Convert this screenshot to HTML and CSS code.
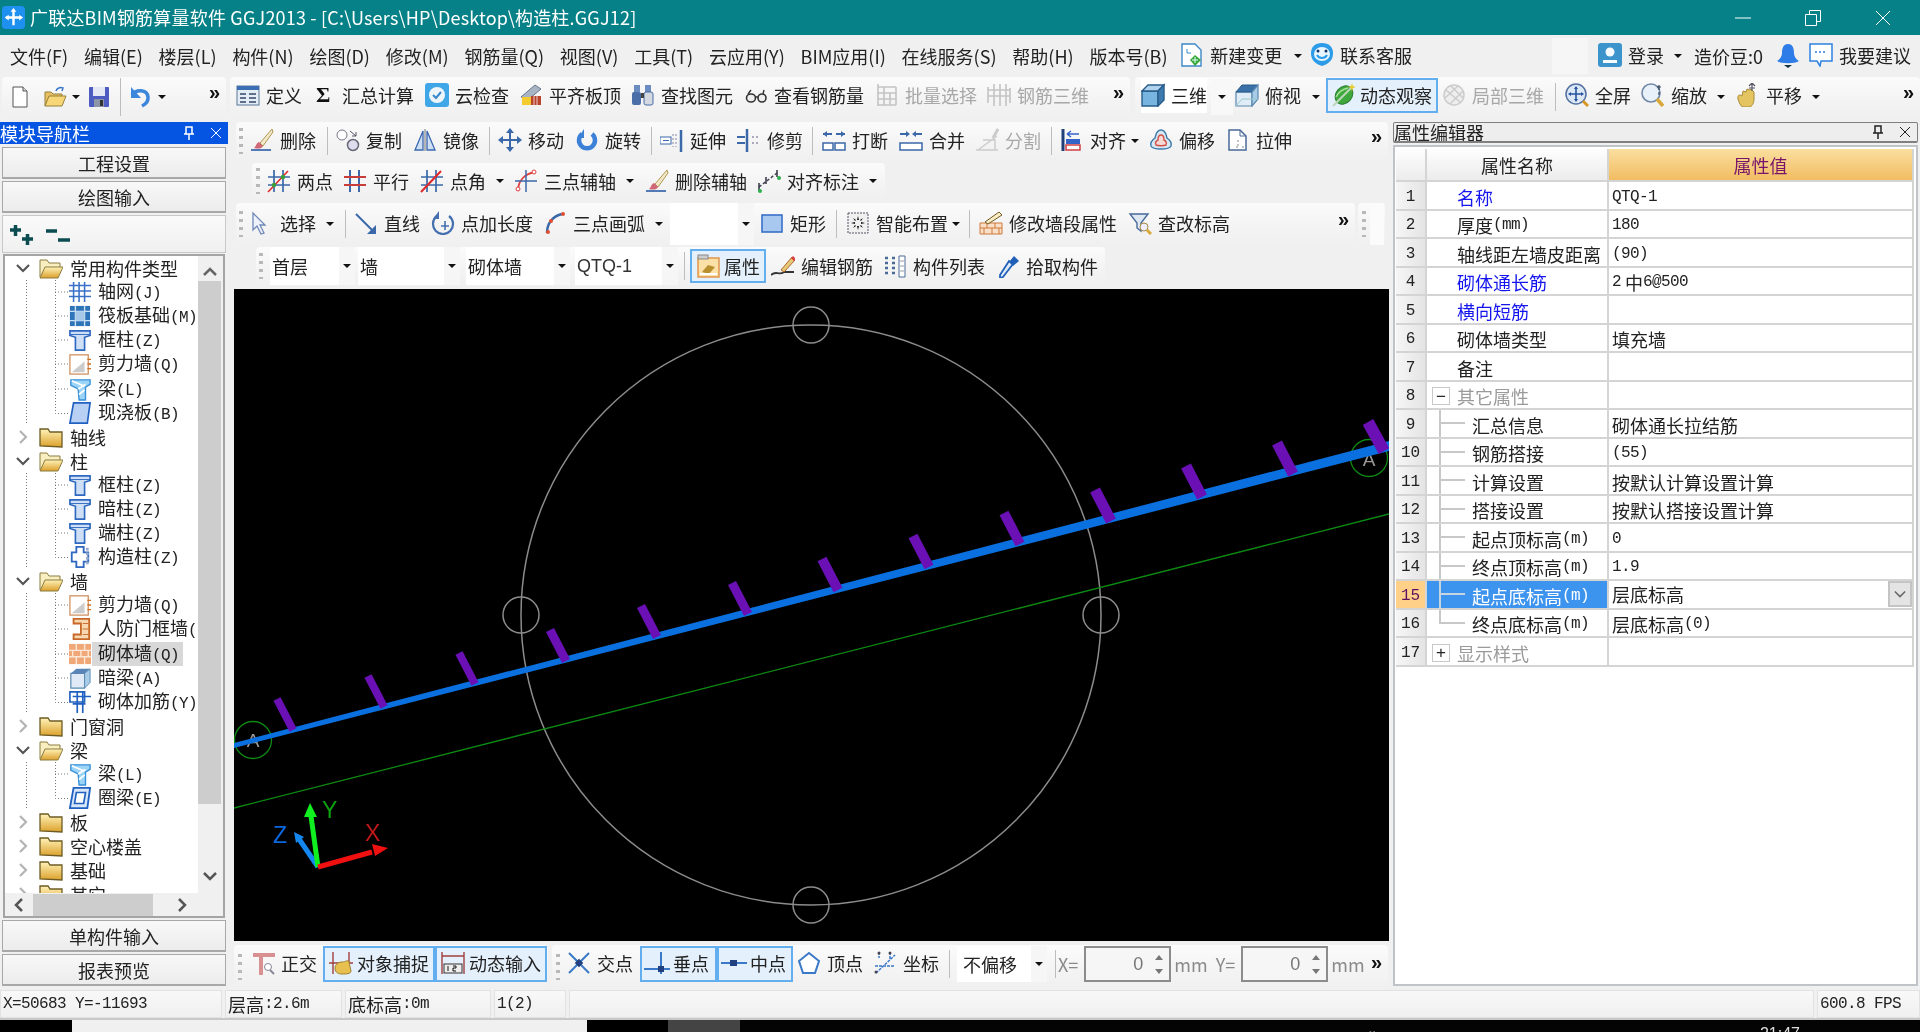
FILE: index.html
```html
<!DOCTYPE html>
<html lang="zh-CN">
<head>
<meta charset="utf-8">
<title>广联达BIM钢筋算量软件 GGJ2013</title>
<link rel="stylesheet" href="styles.css">
</head>
<body>
<svg class="sprite" aria-hidden="true">
<defs>
<linearGradient id="fy" x1="0" y1="0" x2="0" y2="1"><stop offset="0" stop-color="#fff3b8"/><stop offset="1" stop-color="#dca02c"/></linearGradient>
<symbol id="new" viewBox="0 0 24 24"><path d="M5 2h10l4 4v16H5z" fill="#fff" stroke="#555"/><path d="M15 2v4h4" fill="#ddd" stroke="#555"/></symbol>
<symbol id="open" viewBox="0 0 24 24"><path d="M2 21V7h6l2 2h9v3" fill="#e8c060" stroke="#96803c"/><path d="M2 21l4-10h17l-4 10z" fill="#f6d676" stroke="#96803c"/><path d="M13 6c1-3 4-4 7-3l-1 3" fill="none" stroke="#3a78c8" stroke-width="1.5"/></symbol>
<symbol id="save" viewBox="0 0 24 24"><rect x="2" y="2" width="20" height="20" rx="1" fill="#4c5cc0"/><rect x="6" y="2" width="12" height="9" fill="#e4e8f4"/><rect x="7" y="14" width="10" height="8" fill="#8c96a8"/><rect x="13" y="15" width="3" height="6" fill="#333"/></symbol>
<symbol id="undo" viewBox="0 0 24 24"><path d="M3 10c4-6 15-6 16 2 .6 5-4 8-6 9" fill="none" stroke="#3c86dc" stroke-width="3.5"/><path d="M2 2v11h10z" fill="#3c86dc"/></symbol>
<symbol id="def" viewBox="0 0 24 24"><rect x="1" y="3" width="22" height="19" fill="#e4ecf6" stroke="#5a7898"/><rect x="1" y="3" width="22" height="4" fill="#3c6eb4"/><path d="M4 11h6M4 15h6M4 19h6M13 11h7M13 15h7M13 19h7" stroke="#60708a" stroke-width="2"/></symbol>
<symbol id="cloud" viewBox="0 0 24 24"><rect x="0" y="0" width="24" height="24" rx="3" fill="#3fa6e8"/><circle cx="12" cy="12" r="8" fill="#eef6fc"/><path d="M8 12l3 3 5-6" fill="none" stroke="#3a88c8" stroke-width="2"/></symbol>
<symbol id="flat" viewBox="0 0 24 24"><path d="M2 14L16 2l6 4L9 17z" fill="#a8b4c4" stroke="#66788c"/><rect x="3" y="14" width="9" height="8" fill="#f4cc30"/><path d="M12 22V13h10v9z" fill="#b8442c"/><path d="M15 13v9M18 13v9" stroke="#ecc" /></symbol>
<symbol id="binoc" viewBox="0 0 24 24"><rect x="3" y="2" width="6" height="7" fill="#6a8cc0"/><rect x="14" y="2" width="6" height="7" fill="#6a8cc0"/><rect x="1" y="9" width="9" height="13" rx="2" fill="#4a6ea8"/><rect x="13" y="9" width="9" height="13" rx="2" fill="#d4d8e0" stroke="#4a6ea8"/><rect x="10" y="10" width="3" height="5" fill="#444"/></symbol>
<symbol id="glass" viewBox="0 0 24 24"><ellipse cx="7" cy="15" rx="4.5" ry="4" fill="#eee" stroke="#333" stroke-width="1.6"/><ellipse cx="18" cy="15" rx="4" ry="4" fill="#eee" stroke="#333" stroke-width="1.6"/><path d="M11 14h3M4 11l3-4M19 11l1-4" stroke="#333" stroke-width="1.4" fill="none"/></symbol>
<symbol id="batch" viewBox="0 0 24 24"><path d="M3 1v22M3 4h18M3 10h18M3 16h18M3 22h18M9 4v18M21 4v18M15 10v12" stroke="#c4c4c4" stroke-width="1.6" fill="none"/></symbol>
<symbol id="rb3d" viewBox="0 0 24 24"><path d="M1 4v16M7 1v22M13 1v22M19 1v22M23 5v15M1 7h22M1 13h22" stroke="#c4c4c4" stroke-width="1.6" fill="none"/></symbol>
<symbol id="cube" viewBox="0 0 24 24"><path d="M1 8h16v15H1z" fill="#78b4e0" stroke="#285c88" stroke-width="1.4"/><path d="M1 8l6-6h16L17 8z" fill="#b0d4ee" stroke="#285c88" stroke-width="1.4"/><path d="M17 8l6-6v15l-6 6z" fill="#3c7ab0" stroke="#285c88" stroke-width="1.4"/></symbol>
<symbol id="cubet" viewBox="0 0 24 24"><path d="M1 9h16v14H1z" fill="#e0ecf6" stroke="#5a88b0" stroke-width="1.2"/><path d="M1 9l6-7h16l-6 7z" fill="#3a70a8" stroke="#285c88"/><path d="M17 9l6-7v14l-6 7z" fill="#a8cce8" stroke="#5a88b0" stroke-width="1.2"/><path d="M1 23l6-7h16" fill="none" stroke="#9cc" /></symbol>
<symbol id="orbit" viewBox="0 0 24 24"><ellipse cx="12" cy="12" rx="8" ry="10" transform="rotate(40 12 12)" fill="#3ea83c" stroke="#2c7c30"/><path d="M1 23L20 4" stroke="#bcd8b8" stroke-width="2"/><path d="M4 14c3-6 7-8 12-9" fill="none" stroke="#a8e098" stroke-width="1.400"/><path d="M20 0l1 3 3 1-3 1-1 4-1-4-3-1 3-1z" fill="#e8cc30"/></symbol>
<symbol id="ball" viewBox="0 0 24 24"><circle cx="12" cy="12" r="10" fill="#eee" stroke="#ccc" stroke-width="1.5"/><path d="M4 7l14 12M9 3l12 12M3 15L16 3M8 21L21 8" stroke="#ccc" stroke-width="1.5"/></symbol>
<symbol id="full" viewBox="0 0 24 24"><circle cx="11" cy="11" r="10" fill="#dce8f6" stroke="#5470a0" stroke-width="1.5"/><path d="M11 4v14M4 11h14" stroke="#2a54a0" stroke-width="1.6"/><path d="M11 3l-2 3h4zM11 19l-2-3h4zM3 11l3-2v4zM19 11l-3-2v4z" fill="#2a54a0"/><path d="M18 18l5 5" stroke="#d89828" stroke-width="3"/></symbol>
<symbol id="zoom" viewBox="0 0 24 24"><circle cx="10" cy="10" r="9" fill="#e8f0fa" stroke="#7088a8" stroke-width="1.6"/><path d="M16 16l6 7" stroke="#d8a838" stroke-width="3.5"/><path d="M18 2v5M16 4h4M18 9v3" stroke="#345" stroke-width="1.2"/></symbol>
<symbol id="hand" viewBox="0 0 24 24"><path d="M2 16c-1-4 2-5 4-3l1-5 3 1 1-3 3 1 1-1 3 3v7c0 4-2 8-5 8H7c-3-1-4-5-5-8z" fill="#e4c460" stroke="#a88c38"/><path d="M16 0v8M13 3l3-3 3 3M13 5h6" stroke="#556" stroke-width="1.200" fill="none"/></symbol>
<symbol id="del" viewBox="0 0 24 24"><path d="M22 1L10 15l3 3L23 4z" fill="#f0e8c8" stroke="#b09850"/><path d="M9 14c-3 1-3 5-5 6 3 1 8 1 9-2z" fill="#d06878"/><path d="M1 22h20" stroke="#2a5ca8" stroke-width="1.6"/></symbol>
<symbol id="copy" viewBox="0 0 24 24"><circle cx="6" cy="7" r="5" fill="#fff" stroke="#778"/><circle cx="17" cy="17" r="5.5" fill="#dde" stroke="#667" stroke-width="1.5"/><path d="M14 3l6 5M20 4v4h-4" stroke="#556" fill="none"/></symbol>
<symbol id="mirror" viewBox="0 0 24 24"><path d="M10 3L2 22h8z" fill="#cfe0f4" stroke="#3a68b0" stroke-width="1.3"/><path d="M14 3l8 19h-8z" fill="#cfe0f4" stroke="#3a68b0" stroke-width="1.3"/><path d="M12 1v22" stroke="#777"/></symbol>
<symbol id="move" viewBox="0 0 24 24"><path d="M12 3v18M3 12h18" stroke="#3a68a8" stroke-width="2"/><path d="M12 0l-4 5h8zM12 24l-4-5h8zM0 12l5-4v8zM24 12l-5-4v8z" fill="#3a68a8"/></symbol>
<symbol id="rot" viewBox="0 0 24 24"><path d="M7 6a8 8 0 1 0 10 0" fill="none" stroke="#3c80d8" stroke-width="4.5"/><path d="M9 1v9H3z" fill="#3c80d8"/></symbol>
<symbol id="ext" viewBox="0 0 24 24"><rect x="0" y="9" width="11" height="7" fill="#fff" stroke="#3a68a8"/><path d="M3 12.500h6" stroke="#3a68a8" /><path d="M13 6v13M16 6v13" stroke="#88a" stroke-dasharray="2 2"/><path d="M21 2v22" stroke="#3a68a8" stroke-width="2.5"/></symbol>
<symbol id="trim" viewBox="0 0 24 24"><path d="M0 9h8M0 15h8" stroke="#3a68a8" stroke-width="2"/><path d="M10 1v23" stroke="#3a68a8" stroke-width="2.500"/><path d="M15 9h7M15 15h7" stroke="#aab" stroke-width="2" stroke-dasharray="2 2"/></symbol>
<symbol id="brk" viewBox="0 0 24 24"><path d="M1 15h10v7H1zM13 15h10v7H13z" fill="#fff" stroke="#3a68a8" stroke-width="1.500"/><path d="M1 6h9M14 6h9" stroke="#3a68a8" stroke-width="2"/><path d="M1 6l4-3v6zM23 6l-4-3v6z" fill="#3a68a8"/></symbol>
<symbol id="mrg" viewBox="0 0 24 24"><path d="M1 15h22v7H1z" fill="#fff" stroke="#3a68a8" stroke-width="1.500"/><path d="M1 6h8M15 6h8" stroke="#3a68a8" stroke-width="2"/><path d="M11 6L7 3v6zM13 6l4-3v6z" fill="#3a68a8"/></symbol>
<symbol id="spl" viewBox="0 0 24 24"><path d="M1 22h22M3 22l19-14M8 12h12v10" stroke="#ccc" stroke-width="1.500" fill="none"/><path d="M18 10L23 1" stroke="#ccc" stroke-width="3"/></symbol>
<symbol id="aln" viewBox="0 0 24 24"><path d="M3 1v22" stroke="#20407c" stroke-width="3"/><rect x="6" y="11" width="14" height="5" fill="#3464c8"/><rect x="6" y="17" width="14" height="5" fill="#fff" stroke="#d04040" stroke-width="1.500"/><path d="M7 6h12M7 6l4-3M7 6l4 3" stroke="#3464c8" stroke-width="1.500" fill="none"/></symbol>
<symbol id="off" viewBox="0 0 24 24"><path d="M12 2c5 0 5 5 6 8 3 2 5 4 4 8-2 4-18 4-20 0-1-4 1-6 4-8 1-3 1-8 6-8z" fill="#d8e8f4" stroke="#3a78a8" stroke-width="1.400"/><path d="M12 7c3 0 3 3 3 5 2 1 3 3 2 5-2 1-8 1-10 0-1-2 0-4 2-5 0-2 0-5 3-5z" fill="#f8d8d4" stroke="#d05048" stroke-width="1.400"/></symbol>
<symbol id="str" viewBox="0 0 24 24"><path d="M3 2h11l6 6v14H3z" fill="#fff" stroke="#4a6a98" stroke-width="1.500"/><path d="M14 2v6h6" fill="none" stroke="#4a6a98"/><path d="M12 12v2M12 16v2M16 19h2M10 19h2" stroke="#888"/></symbol>
<symbol id="twop" viewBox="0 0 24 24"><path d="M7 1v22M16 1v22M1 8h22M1 16h22" stroke="#3a68a8" stroke-width="1.700"/><path d="M1 23L21 2" stroke="#e02828" stroke-width="1.600"/><circle cx="7" cy="16" r="2.200" fill="#38a038"/><circle cx="16" cy="8" r="2.200" fill="#38a038"/></symbol>
<symbol id="par" viewBox="0 0 24 24"><path d="M7 1v22M16 1v22" stroke="#3a68a8" stroke-width="2"/><path d="M1 8h22M1 16h22" stroke="#c83c3c" stroke-width="2"/></symbol>
<symbol id="angl" viewBox="0 0 24 24"><path d="M7 1v22M16 1v22M1 8h22M1 16h22" stroke="#3a68a8" stroke-width="1.700"/><path d="M1 23L21 2" stroke="#e02828" stroke-width="2"/></symbol>
<symbol id="arc3" viewBox="0 0 24 24"><path d="M4 22C4 12 10 5 21 3" fill="none" stroke="#e04040" stroke-width="1.800"/><path d="M12 1v22M1 12h22" stroke="#3a68a8" stroke-width="1.500"/><circle cx="4" cy="20" r="2" fill="#fff" stroke="#e04040"/><circle cx="20" cy="3" r="2" fill="#fff" stroke="#e04040"/></symbol>
<symbol id="dim" viewBox="0 0 24 24"><path d="M2 18L20 4" stroke="#445" stroke-width="1.500" stroke-dasharray="3 2"/><path d="M2 14v8M9 8v7M20 1v7" stroke="#334" stroke-width="1.500"/><circle cx="3" cy="22" r="2" fill="#30b050"/><circle cx="22" cy="9" r="2" fill="#30b050"/></symbol>
<symbol id="cur" viewBox="0 0 24 24"><path d="M3 2v17l4-4 4 8 3-1-4-8h5z" fill="#eef2fa" stroke="#7088b8" stroke-width="1.300"/></symbol>
<symbol id="line" viewBox="0 0 24 24"><path d="M2 3l18 18" stroke="#3a68a8" stroke-width="2"/><path d="M22 23v-9l-9 9z" fill="#3a68a8"/></symbol>
<symbol id="plen" viewBox="0 0 24 24"><path d="M6 5a10 10 0 1 0 12 0" fill="none" stroke="#4470b0" stroke-width="2.200"/><path d="M8 0v8H2z" fill="#4470b0"/><path d="M14 10v9M10 15h8" stroke="#4470b0" stroke-width="1.600"/></symbol>
<symbol id="arc" viewBox="0 0 24 24"><path d="M4 22C4 12 10 5 19 3" fill="none" stroke="#3a68a8" stroke-width="2.500"/><circle cx="5" cy="21" r="2" fill="#e05030"/><circle cx="8" cy="10" r="2" fill="#e05030"/><circle cx="20" cy="3" r="2" fill="#e05030"/></symbol>
<symbol id="rect" viewBox="0 0 24 24"><rect x="2" y="4" width="20" height="17" fill="#a8c8f0" stroke="#3870c8" stroke-width="1.600"/></symbol>
<symbol id="smart" viewBox="0 0 24 24"><rect x="2" y="2" width="20" height="20" fill="#f0f0f0" stroke="#556" stroke-dasharray="2 1"/><path d="M12 5l1 4h-2zM12 19l1-4h-2zM5 12l4-1v2zM19 12l-4-1v2zM7 7l3 2-1 1zM17 17l-3-2 1-1zM17 7l-3 2 1 1zM7 17l3-2-1-1z" fill="#111"/></symbol>
<symbol id="wall" viewBox="0 0 24 24"><path d="M1 12h22v11H1z" fill="#f8e0c8" stroke="#d07838"/><path d="M1 17h22M8 12v5M16 12v5M5 17v6M13 17v6M20 17v6" stroke="#d07838"/><path d="M6 11L20 1l3 3-14 9z" fill="#f8ecc0" stroke="#705828"/></symbol>
<symbol id="elev" viewBox="0 0 24 24"><path d="M2 3h18l-7 9v8l-4-3v-5z" fill="#dde8f4" stroke="#4a6a98" stroke-width="1.400"/><circle cx="16" cy="16" r="4" fill="#eef" stroke="#aa8840"/><path d="M19 19l4 4" stroke="#d8a838" stroke-width="3"/></symbol>
<symbol id="attr" viewBox="0 0 24 24"><rect x="2" y="4" width="21" height="19" fill="#fbe0a8" stroke="#e09040" stroke-width="1.400"/><rect x="2" y="1" width="10" height="4" fill="#ccc" stroke="#888"/><path d="M6 18l6-7 7 2-6 7z" fill="#b89030"/><rect x="4" y="19" width="17" height="2" fill="#fff"/></symbol>
<symbol id="edit" viewBox="0 0 24 24"><path d="M0 21c5-5 8 1 13-3h10" fill="none" stroke="#333" stroke-width="1.800"/><path d="M10 16L21 3l3 3-11 12z" fill="#e8c878" stroke="#a86828"/><path d="M21 3l3 3" stroke="#d84040" stroke-width="3"/></symbol>
<symbol id="lst" viewBox="0 0 24 24"><path d="M16 2h6v21h-6z" fill="#fff" stroke="#4a6a98"/><path d="M2 4h3M2 9h3M2 14h3M2 19h3M9 4h3M9 9h3M9 14h3M9 19h3" stroke="#4a6a98" stroke-width="2.500"/><path d="M17 7h4M17 12h4M17 17h4" stroke="#99a"/></symbol>
<symbol id="pick" viewBox="0 0 24 24"><path d="M4 21l9-14 4 3-10 13-3 1z" fill="#dfeaf8" stroke="#2060b8" stroke-width="1.800"/><path d="M13 8l5-6 5 5-6 5z" fill="#2060b8"/></symbol>
<symbol id="orth" viewBox="0 0 24 24"><path d="M2 4h22M10 4v20" stroke="#d89090" stroke-width="4"/><circle cx="17" cy="16" r="3.500" fill="#fff" stroke="#889"/><path d="M19 19l4 4" stroke="#889" stroke-width="2"/></symbol>
<symbol id="snap" viewBox="0 0 24 24"><path d="M4 1v22M20 1v13M0 12h24" stroke="#a04040" stroke-width="1.400"/><path d="M6 17c0-4 4-6 7-6 4 0 6-3 7 0l2 9c0 3-5 3-9 3-3 0-7-1-7-6z" fill="#e8c050" stroke="#a08030"/></symbol>
<symbol id="dyn" viewBox="0 0 24 24"><path d="M1 1v22M23 1v22M1 5h22" stroke="#a04040" stroke-width="1.400"/><rect x="3" y="13" width="18" height="9" fill="#eee" stroke="#333"/><path d="M7 15v5M12 15h3v2h-3v3h3" stroke="#111" fill="none"/></symbol>
<symbol id="cross" viewBox="0 0 24 24"><path d="M2 2l20 20M22 2L2 22" stroke="#3a78c8" stroke-width="2"/><rect x="9" y="9" width="6" height="6" fill="#204080" transform="rotate(45 12 12)"/></symbol>
<symbol id="perp" viewBox="0 0 28 24"><path d="M1 18h26" stroke="#3a78c8" stroke-width="2"/><path d="M18 1v22" stroke="#3a78c8" stroke-width="2"/><rect x="15" y="15" width="6" height="6" fill="#204080"/></symbol>
<symbol id="mid" viewBox="0 0 28 24"><path d="M1 12h26" stroke="#3a78c8" stroke-width="2"/><rect x="10" y="9" width="7" height="6" fill="#204080"/></symbol>
<symbol id="vert" viewBox="0 0 24 24"><path d="M12 2l10 8-4 12H6L2 10z" fill="#fff" stroke="#3a78c8" stroke-width="2"/></symbol>
<symbol id="coord" viewBox="0 0 24 24"><path d="M3 22L22 4M6 1v6M17 1v8M2 15h20" stroke="#3a78c8" stroke-width="1.500" stroke-dasharray="3 1"/><circle cx="6" cy="2" r="1.500" fill="#445"/><circle cx="17" cy="2" r="1.500" fill="#445"/><circle cx="3" cy="21" r="1.500" fill="#445"/></symbol>
<symbol id="ngrid" viewBox="0 0 24 24"><path d="M5 1v22M11 1v22M17 1v22M0 5h24M0 11h24M0 17h24" stroke="#3a70c8" stroke-width="1.700"/></symbol>
<symbol id="raft" viewBox="0 0 24 24"><rect x="1" y="1" width="22" height="22" fill="#2e74b8"/><path d="M7 1v22M17 1v22M1 7h22M1 17h22" stroke="#c8e0f4" stroke-width="1.500"/><rect x="7" y="7" width="10" height="10" fill="#a8c8e8"/></symbol>
<symbol id="colu" viewBox="0 0 24 24"><path d="M1 2h22v5l-6 2v14H7V9L1 7z" fill="#cfe0f6" stroke="#2e68c0" stroke-width="1.800"/><path d="M1 6h22" stroke="#2e68c0"/></symbol>
<symbol id="shear" viewBox="0 0 24 24"><rect x="1" y="2" width="20" height="21" fill="#fff" stroke="#d09060" stroke-width="1.400"/><path d="M3 21l14-12v12z" fill="#ccc"/><path d="M20 7h4M20 12h4M20 17h4" stroke="#d07020" stroke-width="1.500"/></symbol>
<symbol id="beam" viewBox="0 0 24 24"><path d="M2 2h21v5l-5 3v14h-7l-1-12L2 8z" fill="#9cd4f8" stroke="#3890d8" stroke-width="1.500"/><path d="M3 3l14 6M10 12l8-5M11 18l6-5" stroke="#fff" stroke-width="2"/></symbol>
<symbol id="slab" viewBox="0 0 24 24"><path d="M5 1h18l-3 22H1z" fill="#b8d0f4" stroke="#2060c0" stroke-width="1.800"/></symbol>
<symbol id="gzz" viewBox="0 0 24 24"><path d="M8 1h8v6h5v10h-5v6H8v-6H3V7h5z" fill="#fff" stroke="#2e68c0" stroke-width="2"/><path d="M20 2v20" stroke="#9ac" stroke-dasharray="3 2" stroke-width="3"/></symbol>
<symbol id="rfw" viewBox="0 0 24 24"><path d="M5 1h17v22H5v-5h8V6H5z" fill="#f8d8b0" stroke="#c86828" stroke-width="2"/><path d="M15 6h6M15 12h6M15 18h6" stroke="#c86828"/></symbol>
<symbol id="brick" viewBox="0 0 24 24"><rect x="0" y="1" width="24" height="22" fill="#f0a878"/><path d="M0 8h24M0 15h24" stroke="#fde8d8" stroke-width="1.500"/><path d="M8 1v7M17 1v7M4 8v7M13 8v7M21 8v7M8 15v8M17 15v8" stroke="#fde8d8" stroke-width="1.500"/></symbol>
<symbol id="hb" viewBox="0 0 24 24"><path d="M2 7h15v16H2z" fill="#dfeaf6" stroke="#5a88b0" stroke-width="1.300"/><path d="M2 7l6-5h15l-6 5z" fill="#5884b8"/><path d="M17 7l6-5v15l-6 6z" fill="#a8cce8" stroke="#5a88b0"/></symbol>
<symbol id="rein" viewBox="0 0 24 24"><path d="M1 1h16v11H1z" fill="none" stroke="#2060c0" stroke-width="1.800"/><path d="M4 6h20M9 1v23M15 1v23M4 14h14" stroke="#2060c0" stroke-width="1.800"/></symbol>
<symbol id="ring" viewBox="0 0 24 24"><path d="M5 1h18l-3 22H1z" fill="#d8e6fa" stroke="#2060c0" stroke-width="2"/><path d="M8 6h10l-2 12H6z" fill="#fff" stroke="#2060c0" stroke-width="1.800"/></symbol>
<symbol id="chg" viewBox="0 0 24 24"><path d="M2 1h13l6 6v16H2z" fill="#fff" stroke="#3c88c8" stroke-width="1.400"/><path d="M7 6v4h4" fill="none" stroke="#3c88c8"/><path d="M15 12l6 5-6 6-5-6z" fill="#38a838"/><path d="M15 14v6M12 17h6" stroke="#dff"/></symbol>
<symbol id="svc" viewBox="0 0 24 24"><path d="M12 0c7 0 11 4 11 10 0 4-1 10-11 13C2 20 1 14 1 10 1 4 5 0 12 0z" fill="#2c9ce8"/><ellipse cx="12" cy="11" rx="8" ry="7" fill="#e8f6ff"/><circle cx="8" cy="8" r="1.500" fill="#136"/><circle cx="16" cy="8" r="1.500" fill="#136"/><path d="M7 12c2 4 8 4 10 0" fill="none" stroke="#2c9ce8" stroke-width="2"/></symbol>
<symbol id="login" viewBox="0 0 24 24"><rect x="0" y="0" width="24" height="24" rx="3" fill="#3c94cc"/><circle cx="12" cy="9" r="4.500" fill="#f4fafd"/><path d="M5 20v-3h14v3z" fill="#f4fafd"/></symbol>
<symbol id="bell" viewBox="0 0 24 24"><path d="M12 0c5 0 6 5 6 9s3 7 5 8c-4 3-18 3-22 0 2-1 5-4 5-8s1-9 6-9z" fill="#2e7ce8"/><path d="M8 21h8l-4 3z" fill="#134"/></symbol>
<symbol id="sug" viewBox="0 0 24 24"><path d="M1 1h22v17H12l-1 5-3-5H1z" fill="#fff" stroke="#2e80e0" stroke-width="1.500"/><path d="M6 9h12" stroke="#2e80e0" stroke-width="1.600" stroke-dasharray="2 2"/></symbol>
<symbol id="fopen" viewBox="0 0 24 24"><path d="M1 21V4h7l2 3h11v5" fill="#f8eec0" stroke="#8c7c40"/><path d="M1 22l5-11h18l-5 11z" fill="url(#fy)" stroke="#8c7c40"/></symbol>
<symbol id="fclosed" viewBox="0 0 24 24"><path d="M1 21V4h8l2 3h12v15z" fill="url(#fy)" stroke="#6c5c24" stroke-width="1.300"/></symbol>
<symbol id="cv" viewBox="0 0 14 14"><path d="M1 4l6 6 6-6" fill="none" stroke="#555" stroke-width="2.200"/></symbol>
<symbol id="cr" viewBox="0 0 14 14"><path d="M4 1l6 6-6 6" fill="none" stroke="#b4b4b4" stroke-width="2.200"/></symbol>
<symbol id="g1" viewBox="0 0 66 24"><path d="M23.500 0v24M52.500 0v24M52 12h14" stroke="#777" stroke-dasharray="1 2" fill="none"/></symbol>
<symbol id="g2" viewBox="0 0 66 24"><path d="M23.500 0v24M52.500 0v12.500h14" stroke="#777" stroke-dasharray="1 2" fill="none"/></symbol>
<symbol id="pin" viewBox="0 0 12 14"><path d="M3 1h6v7H3zM1 8h10M6 8v6" fill="none" stroke="currentColor" stroke-width="1.500"/></symbol>
<symbol id="x" viewBox="0 0 12 12"><path d="M1 1l10 10M11 1L1 11" stroke="currentColor" stroke-width="1"/></symbol>
</defs>
</svg>

<div class="app">
<header class="titlebar">
  <svg class="logo" viewBox="0 0 24 24"><rect width="24" height="24" rx="4" fill="#1e90f0"/><path d="M12 4v16M4 12h16" stroke="#fff" stroke-width="2.500"/><path d="M12 2l-3 4h6zM22 12l-4-3v6zM3 12l4-3v6z" fill="#fff"/></svg>
  <span class="title-text">广联达BIM钢筋算量软件 GGJ2013 - [C:\Users\HP\Desktop\构造柱.GGJ12]</span>
  <div class="winctl">
    <svg class="wc" viewBox="0 0 16 16"><path d="M0 8h16" stroke="#fff"/></svg>
    <svg class="wc" viewBox="0 0 16 16"><path d="M.5 4.500h11v11H.5zM4.500 4V.5h11v11H12" fill="none" stroke="#fff"/></svg>
    <svg class="wc" viewBox="0 0 16 16"><path d="M1 1l14 14M15 1L1 15" stroke="#fff"/></svg>
  </div>
</header>

<nav class="menubar">
  <span>文件(F)</span><span>编辑(E)</span><span>楼层(L)</span><span>构件(N)</span><span>绘图(D)</span><span>修改(M)</span><span>钢筋量(Q)</span><span>视图(V)</span><span>工具(T)</span><span>云应用(Y)</span><span>BIM应用(I)</span><span>在线服务(S)</span><span>帮助(H)</span><span>版本号(B)</span>
  <span class="it chg-it"><svg class="ic"><use href="#chg"/></svg>新建变更</span><i class="ar tight"></i>
  <span class="it svc-it"><svg class="ic"><use href="#svc"/></svg>联系客服</span>
  <div class="menu-right">
    <span class="blank"></span>
    <span class="it"><svg class="ic"><use href="#login"/></svg>登录</span><i class="ar"></i>
    <span class="coin">造价豆:0</span>
    <svg class="ic bell"><use href="#bell"/></svg>
    <span class="it"><svg class="ic"><use href="#sug"/></svg>我要建议</span>
  </div>
</nav>

<div class="toprow">
  <div class="tb t-file">
    <svg class="ic ml0"><use href="#new"/></svg>
    <svg class="ic ml11"><use href="#open"/></svg><i class="ar ml3"></i>
    <svg class="ic ml5"><use href="#save"/></svg>
    <b class="sep ml9 tall"></b>
    <svg class="ic ml8"><use href="#undo"/></svg><i class="ar ml3"></i>
    <em class="more">»</em>
  </div>
  <div class="tb t-main">
    <span class="it"><svg class="ic"><use href="#def"/></svg>定义</span>
    <span class="it ml14"><b class="sigma">Σ</b>汇总计算</span>
    <span class="it ml11"><svg class="ic"><use href="#cloud"/></svg>云检查</span>
    <span class="it ml10"><svg class="ic"><use href="#flat"/></svg>平齐板顶</span>
    <span class="it ml10"><svg class="ic"><use href="#binoc"/></svg>查找图元</span>
    <span class="it ml11"><svg class="ic"><use href="#glass"/></svg>查看钢筋量</span>
    <span class="it ml11 off"><svg class="ic"><use href="#batch"/></svg>批量选择</span>
    <span class="it ml10 off"><svg class="ic"><use href="#rb3d"/></svg>钢筋三维</span>
    <em class="more">»</em>
  </div>
  <div class="tb t-view">
    <span class="it white-it"><svg class="ic"><use href="#cube"/></svg>三维</span><i class="ar box"></i>
    <span class="it ml2"><svg class="ic"><use href="#cubet"/></svg>俯视</span><i class="ar ml9"></i>
    <span class="it act ml4 w112"><svg class="ic"><use href="#orbit"/></svg>动态观察</span>
    <span class="it ml4 off"><svg class="ic"><use href="#ball"/></svg>局部三维</span>
    <b class="sep ml11"></b>
    <span class="it ml9"><svg class="ic"><use href="#full"/></svg>全屏</span>
    <span class="it ml10"><svg class="ic"><use href="#zoom"/></svg>缩放</span><i class="ar ml8"></i>
    <span class="it ml9"><svg class="ic"><use href="#hand"/></svg>平移</span><i class="ar ml8"></i>
    <em class="more">»</em>
  </div>
</div>

<main class="work">
  <aside class="left">
    <div class="panelhead blue"><span>模块导航栏</span><svg class="pin"><use href="#pin"/></svg><svg class="close"><use href="#x"/></svg></div>
    <button class="navbtn first">工程设置</button>
    <button class="navbtn">绘图输入</button>
    <div class="plusbar">
      <svg viewBox="0 0 30 26"><path d="M1 9h11M6.500 4v11M13 18h11M18.500 13v11" stroke="#0b4c50" stroke-width="3.500"/></svg>
      <svg viewBox="0 0 30 26"><path d="M1 10h11M13 19h12" stroke="#0b4c50" stroke-width="3.500"/></svg>
    </div>
    <div class="treebox">
      <div class="treeview">
        <div class="tr"><svg class="ch"><use href="#cv"/></svg><svg class="fd"><use href="#fopen"/></svg><span>常用构件类型</span></div>
        <div class="tr"><svg class="gd"><use href="#g1"/></svg><svg class="ti"><use href="#ngrid"/></svg><span>轴网<span class="ln">(J)</span></span></div>
        <div class="tr"><svg class="gd"><use href="#g1"/></svg><svg class="ti"><use href="#raft"/></svg><span>筏板基础<span class="ln">(M)</span></span></div>
        <div class="tr"><svg class="gd"><use href="#g1"/></svg><svg class="ti"><use href="#colu"/></svg><span>框柱<span class="ln">(Z)</span></span></div>
        <div class="tr"><svg class="gd"><use href="#g1"/></svg><svg class="ti"><use href="#shear"/></svg><span>剪力墙<span class="ln">(Q)</span></span></div>
        <div class="tr"><svg class="gd"><use href="#g1"/></svg><svg class="ti"><use href="#beam"/></svg><span>梁<span class="ln">(L)</span></span></div>
        <div class="tr"><svg class="gd"><use href="#g2"/></svg><svg class="ti"><use href="#slab"/></svg><span>现浇板<span class="ln">(B)</span></span></div>
        <div class="tr"><svg class="ch"><use href="#cr"/></svg><svg class="fd"><use href="#fclosed"/></svg><span>轴线</span></div>
        <div class="tr"><svg class="ch"><use href="#cv"/></svg><svg class="fd"><use href="#fopen"/></svg><span>柱</span></div>
        <div class="tr"><svg class="gd"><use href="#g1"/></svg><svg class="ti"><use href="#colu"/></svg><span>框柱<span class="ln">(Z)</span></span></div>
        <div class="tr"><svg class="gd"><use href="#g1"/></svg><svg class="ti"><use href="#colu"/></svg><span>暗柱<span class="ln">(Z)</span></span></div>
        <div class="tr"><svg class="gd"><use href="#g1"/></svg><svg class="ti"><use href="#colu"/></svg><span>端柱<span class="ln">(Z)</span></span></div>
        <div class="tr"><svg class="gd"><use href="#g2"/></svg><svg class="ti"><use href="#gzz"/></svg><span>构造柱<span class="ln">(Z)</span></span></div>
        <div class="tr"><svg class="ch"><use href="#cv"/></svg><svg class="fd"><use href="#fopen"/></svg><span>墙</span></div>
        <div class="tr"><svg class="gd"><use href="#g1"/></svg><svg class="ti"><use href="#shear"/></svg><span>剪力墙<span class="ln">(Q)</span></span></div>
        <div class="tr"><svg class="gd"><use href="#g1"/></svg><svg class="ti"><use href="#rfw"/></svg><span>人防门框墙<span class="ln">(</span></span></div>
        <div class="tr"><svg class="gd"><use href="#g1"/></svg><svg class="ti"><use href="#brick"/></svg><span class="sel">砌体墙<span class="ln">(Q)</span></span></div>
        <div class="tr"><svg class="gd"><use href="#g1"/></svg><svg class="ti"><use href="#hb"/></svg><span>暗梁<span class="ln">(A)</span></span></div>
        <div class="tr"><svg class="gd"><use href="#g2"/></svg><svg class="ti"><use href="#rein"/></svg><span>砌体加筋<span class="ln">(Y)</span></span></div>
        <div class="tr"><svg class="ch"><use href="#cr"/></svg><svg class="fd"><use href="#fclosed"/></svg><span>门窗洞</span></div>
        <div class="tr"><svg class="ch"><use href="#cv"/></svg><svg class="fd"><use href="#fopen"/></svg><span>梁</span></div>
        <div class="tr"><svg class="gd"><use href="#g1"/></svg><svg class="ti"><use href="#beam"/></svg><span>梁<span class="ln">(L)</span></span></div>
        <div class="tr"><svg class="gd"><use href="#g2"/></svg><svg class="ti"><use href="#ring"/></svg><span>圈梁<span class="ln">(E)</span></span></div>
        <div class="tr"><svg class="ch"><use href="#cr"/></svg><svg class="fd"><use href="#fclosed"/></svg><span>板</span></div>
        <div class="tr"><svg class="ch"><use href="#cr"/></svg><svg class="fd"><use href="#fclosed"/></svg><span>空心楼盖</span></div>
        <div class="tr"><svg class="ch"><use href="#cr"/></svg><svg class="fd"><use href="#fclosed"/></svg><span>基础</span></div>
        <div class="tr"><svg class="ch"><use href="#cr"/></svg><svg class="fd"><use href="#fclosed"/></svg><span>其它</span></div>
      </div>
      <div class="vscroll"><svg viewBox="0 0 14 14" class="sa"><path d="M1 10l6-6 6 6" fill="none" stroke="#666" stroke-width="2.500"/></svg><div class="vthumb"></div><svg viewBox="0 0 14 14" class="sa"><path d="M1 4l6 6 6-6" fill="none" stroke="#555" stroke-width="2.500"/></svg></div>
      <div class="hscroll"><svg viewBox="0 0 14 14" class="sa"><path d="M10 1L4 7l6 6" fill="none" stroke="#555" stroke-width="2.500"/></svg><div class="hthumb"></div><svg viewBox="0 0 14 14" class="sa"><path d="M4 1l6 6-6 6" fill="none" stroke="#555" stroke-width="2.500"/></svg></div>
    </div>
    <button class="navbtn low">单构件输入</button>
    <button class="navbtn">报表预览</button>
  </aside>

  <section class="center">
    <div class="tb r-a">
      <i class="grip ml3"></i>
      <span class="it ml7"><svg class="ic"><use href="#del"/></svg>删除</span><b class="sep ml11"></b>
      <span class="it ml8"><svg class="ic"><use href="#copy"/></svg>复制</span>
      <span class="it ml11"><svg class="ic"><use href="#mirror"/></svg>镜像</span><b class="sep ml10"></b>
      <span class="it ml8"><svg class="ic"><use href="#move"/></svg>移动</span>
      <span class="it ml11"><svg class="ic"><use href="#rot"/></svg>旋转</span><b class="sep ml10"></b>
      <span class="it ml8"><svg class="ic"><use href="#ext"/></svg>延伸</span>
      <span class="it ml11"><svg class="ic"><use href="#trim"/></svg>修剪</span><b class="sep ml9"></b>
      <span class="it ml9"><svg class="ic"><use href="#brk"/></svg>打断</span>
      <span class="it ml11"><svg class="ic"><use href="#mrg"/></svg>合并</span>
      <span class="it ml10 off"><svg class="ic"><use href="#spl"/></svg>分割</span><b class="sep ml10"></b>
      <span class="it ml8"><svg class="ic"><use href="#aln"/></svg>对齐</span><i class="ar ml3"></i>
      <span class="it ml8"><svg class="ic"><use href="#off"/></svg>偏移</span>
      <span class="it ml11"><svg class="ic"><use href="#str"/></svg>拉伸</span>
      <em class="more">»</em>
    </div>
    <div class="tb r-b">
      <i class="grip ml4"></i>
      <span class="it ml7"><svg class="ic"><use href="#twop"/></svg>两点</span>
      <span class="it ml10"><svg class="ic"><use href="#par"/></svg>平行</span>
      <span class="it ml11"><svg class="ic"><use href="#angl"/></svg>点角</span><i class="ar ml8"></i>
      <span class="it ml8"><svg class="ic"><use href="#arc3"/></svg>三点辅轴</span><i class="ar ml8"></i>
      <span class="it ml9"><svg class="ic"><use href="#del"/></svg>删除辅轴</span>
      <span class="it ml10"><svg class="ic"><use href="#dim"/></svg>对齐标注</span><i class="ar ml8"></i>
    </div>
    <div class="rowc">
      <div class="tb r-c">
        <i class="grip ml3"></i>
        <span class="it ml7"><svg class="ic"><use href="#cur"/></svg>选择</span><i class="ar ml8"></i><b class="sep ml9"></b>
        <span class="it ml8"><svg class="ic"><use href="#line"/></svg>直线</span>
        <span class="it ml11"><svg class="ic"><use href="#plen"/></svg>点加长度</span>
        <span class="it ml10"><svg class="ic"><use href="#arc"/></svg>三点画弧</span><i class="ar ml8"></i>
        <span class="combo ml5 w84"><i class="ar"></i></span>
        <span class="it ml6"><svg class="ic"><use href="#rect"/></svg>矩形</span><b class="sep ml10"></b>
        <span class="it ml9"><svg class="ic"><use href="#smart"/></svg>智能布置</span><i class="ar ml2"></i><b class="sep ml7"></b>
        <span class="it ml9"><svg class="ic"><use href="#wall"/></svg>修改墙段属性</span>
        <span class="it ml11"><svg class="ic"><use href="#elev"/></svg>查改标高</span>
        <em class="more">»</em>
      </div>
      <div class="tb r-c2"><i class="grip"></i><span class="blankbox"></span></div>
    </div>
    <div class="tb r-d">
      <i class="grip ml3"></i>
      <span class="combo ml7 w85"><span>首层</span><i class="ar"></i></span>
      <span class="combo ml3 w102"><span>墙</span><i class="ar"></i></span>
      <span class="combo ml6 w104"><span>砌体墙</span><i class="ar"></i></span>
      <span class="combo ml5 w103"><span class="qtq">QTQ-1</span><i class="ar"></i></span>
      <b class="sep ml6"></b>
      <span class="it act ml5 w76"><svg class="ic"><use href="#attr"/></svg>属性</span>
      <span class="it ml5"><svg class="ic"><use href="#edit"/></svg>编辑钢筋</span>
      <span class="it ml10"><svg class="ic"><use href="#lst"/></svg>构件列表</span>
      <span class="it ml11"><svg class="ic"><use href="#pick"/></svg>拾取构件</span>
    </div>

    <svg class="canvas" viewBox="234 289 1155 652">
      <g fill="none" stroke="#8c8c8c" stroke-width="1.500">
        <circle cx="811" cy="615" r="290"/>
        <circle cx="811" cy="325" r="18"/><circle cx="521" cy="615" r="18"/><circle cx="1101" cy="615" r="18"/><circle cx="811" cy="905" r="18"/>
      </g>
      <path d="M234 808L1389 514" stroke="#0d8a12" stroke-width="1.300"/>
      <circle cx="253" cy="740" r="18.500" fill="none" stroke="#0d8a12" stroke-width="1.300"/>
      <circle cx="1369" cy="458" r="18.500" fill="none" stroke="#0d8a12" stroke-width="1.300"/>
      <text class="cad-a" x="253" y="747">A</text>
      <text class="cad-a" x="1369" y="466">A</text>
      <path d="M234 743L1389 441V451L234 748Z" fill="#0a70e0"/>
      <g stroke="#6a10b4">
        <path d="M277 699l16 31" stroke-width="8"/><path d="M368 676l16 31" stroke-width="8"/><path d="M459 653l16 31" stroke-width="8"/><path d="M550 630l16 31" stroke-width="9"/><path d="M641 606l16 31" stroke-width="9"/><path d="M732 583l16 31" stroke-width="9"/><path d="M822 559l16 31" stroke-width="10"/><path d="M913 536l16 31" stroke-width="10"/><path d="M1004 513l16 31" stroke-width="10"/><path d="M1095 490l16 31" stroke-width="11"/><path d="M1186 466l16 31" stroke-width="11"/><path d="M1277 443l16 31" stroke-width="11"/><path d="M1368 422l16 29" stroke-width="12"/>
      </g>
      <path d="M318 867L297 836" stroke="#1488f0" stroke-width="5"/><path d="M294 832l2 11 8-6z" fill="#1488f0"/>
      <path d="M318 867L311 816" stroke="#10f020" stroke-width="5"/><path d="M310 803l-6 14h13z" fill="#10f020"/>
      <path d="M318 867L372 852" stroke="#f01010" stroke-width="5"/><path d="M388 848l-16-4 3 12z" fill="#f01010"/>
      <text class="cad x" x="365" y="841">X</text>
      <text class="cad y" x="322" y="818">Y</text>
      <text class="cad z" x="273" y="843">Z</text>
    </svg>

    <div class="rowb">
      <div class="tb b-1">
        <i class="grip ml4"></i>
        <span class="it ml9"><svg class="ic"><use href="#orth"/></svg>正交</span>
        <span class="it act ml6 w112"><svg class="ic"><use href="#snap"/></svg>对象捕捉</span>
        <span class="it act w112"><svg class="ic"><use href="#dyn"/></svg>动态输入</span>
      </div>
      <div class="tb b-2">
        <i class="grip ml4"></i>
        <span class="it ml7"><svg class="ic"><use href="#cross"/></svg>交点</span>
        <span class="it act ml7 w77 nar"><svg class="ic wide"><use href="#perp"/></svg>垂点</span>
        <span class="it act w76 nar"><svg class="ic wide"><use href="#mid"/></svg>中点</span>
        <span class="it ml4"><svg class="ic"><use href="#vert"/></svg>顶点</span>
        <span class="it ml10"><svg class="ic"><use href="#coord"/></svg>坐标</span>
        <b class="sep ml10"></b>
        <span class="combo ml7 w90 pad6"><span>不偏移</span><i class="ar"></i></span>
        <b class="sep ml8"></b>
        <span class="gray ml2">X=</span>
        <span class="spin ml6"><span>0</span><i class="sp"><u class="up"></u><u class="dn"></u></i></span>
        <span class="gray ml3">mm</span>
        <span class="gray ml8">Y=</span>
        <span class="spin ml6"><span>0</span><i class="sp"><u class="up"></u><u class="dn"></u></i></span>
        <span class="gray ml3">mm</span>
        <em class="more">»</em>
      </div>
    </div>
  </section>

  <aside class="right">
    <div class="panelhead grayhead"><span>属性编辑器</span><svg class="pin"><use href="#pin"/></svg><svg class="close"><use href="#x"/></svg></div>
    <div class="propbox">
      <div class="grid">
        <div class="c hd"></div><div class="c hd cen">属性名称</div><div class="c hd cen val">属性值</div>

        <div class="c n">1</div><div class="c nm link">名称</div><div class="c v mono">QTQ-1</div>
        <div class="c n">2</div><div class="c nm">厚度<span class="ln">(mm)</span></div><div class="c v mono">180</div>
        <div class="c n">3</div><div class="c nm">轴线距左墙皮距离</div><div class="c v mono">(90)</div>
        <div class="c n">4</div><div class="c nm link">砌体通长筋</div><div class="c v"><span class="ln">2</span>&nbsp;中<span class="ln">6@500</span></div>
        <div class="c n">5</div><div class="c nm link">横向短筋</div><div class="c v"></div>
        <div class="c n">6</div><div class="c nm">砌体墙类型</div><div class="c v">填充墙</div>
        <div class="c n">7</div><div class="c nm">备注</div><div class="c v"></div>
        <div class="c n">8</div><div class="c nm grp"><i class="ex">−</i>其它属性</div><div class="c v"></div>
        <div class="c n">9</div><div class="c nm ch1">汇总信息</div><div class="c v">砌体通长拉结筋</div>
        <div class="c n">10</div><div class="c nm ch1">钢筋搭接</div><div class="c v mono">(55)</div>
        <div class="c n">11</div><div class="c nm ch1">计算设置</div><div class="c v">按默认计算设置计算</div>
        <div class="c n">12</div><div class="c nm ch1">搭接设置</div><div class="c v">按默认搭接设置计算</div>
        <div class="c n">13</div><div class="c nm ch1">起点顶标高<span class="ln">(m)</span></div><div class="c v mono">0</div>
        <div class="c n">14</div><div class="c nm ch1">终点顶标高<span class="ln">(m)</span></div><div class="c v mono">1.9</div>
        <div class="c n cur">15</div><div class="c nm ch1 hl">起点底标高<span class="ln">(m)</span></div><div class="c v dd">层底标高<span class="ddbtn"><svg viewBox="0 0 14 14"><path d="M1 4l6 6 6-6" fill="none" stroke="#666" stroke-width="1.800"/></svg></span></div>
        <div class="c n">16</div><div class="c nm ch1 lastc">终点底标高<span class="ln">(m)</span></div><div class="c v">层底标高<span class="ln">(0)</span></div>
        <div class="c n">17</div><div class="c nm grp"><i class="ex">+</i>显示样式</div><div class="c v"></div>
      </div>
    </div>
  </aside>
</main>

<footer class="status">
  <div class="st s1 mono">X=50683 Y=-11693</div>
  <div class="st s2">层高<span class="ln">:2.6m</span></div>
  <div class="st s3">底标高<span class="ln">:0m</span></div>
  <div class="st s4 mono">1(2)</div>
  <div class="st s5"></div>
  <div class="st s6 mono">600.8 FPS</div>
</footer>

<div class="taskbar">
  <div class="tk black w72"></div>
  <div class="tk light"></div>
  <div class="tk black w81"></div>
  <div class="tk gray-t"></div>
  <div class="tk night"><span class="chev">»</span><span class="clock">21:47</span></div>
</div>
</div>
</body>
</html>
```

FILE: styles.css
```css
* { box-sizing: border-box; }
html, body { margin: 0; height: 100%; overflow: hidden; }
body { font-family: "Noto Sans CJK SC", "Noto Sans", sans-serif; font-size: 18px; color: #222; background: #f0f0f0; }
.sprite { display: block; width: 0; height: 0; }
.app { width: 1920px; height: 1032px; display: flex; flex-direction: column; overflow: hidden; background: #f0f0f0; filter: blur(0.35px); }

.titlebar { height: 35px; flex: none; background: #058187; color: #fff; display: flex; align-items: center; padding-left: 2px; }
.logo { width: 23px; height: 23px; flex: none; }
.title-text { margin-left: 5px; font-size: 18px; line-height: 35px; white-space: nowrap; letter-spacing: 0.2px; }
.winctl { margin-left: auto; display: flex; align-items: center; margin-right: 29px; gap: 54px; }
.wc { width: 16px; height: 16px; }

.menubar { height: 42px; flex: none; display: flex; align-items: center; padding-left: 10px; gap: 15.85px; white-space: nowrap; line-height: 40px; }
.chg-it { margin-left: -3px; }
.svc-it { margin-left: -4px; }
.menu-right { margin-left: auto; display: flex; align-items: center; padding-right: 9px; }
.menu-right .ar { margin-left: 8px; }
.blank { width: 36px; height: 36px; background: #f6f6f6; margin-right: 10px; }
.coin { margin-left: 10px; }
.bell { margin-left: 13px; }
.menu-right .it { margin-left: 0; }
.menu-right .bell + .it { margin-left: 9px; }
.menubar .ar.tight { margin-left: -6px; margin-right: -6px; }

.it { display: inline-flex; align-items: center; gap: 6px; white-space: nowrap; flex: none; height: 100%; padding-bottom: 2px; }
.r-b .it, .r-d .it { padding-bottom: 0; }
.ic { width: 24px; height: 24px; flex: none; }
.ic.wide { width: 28px; }
.off { color: #a8a8a8; }
.sigma { width: 16px; margin-right: 4px; font-family: "Liberation Serif", serif; font-size: 22px; font-weight: 700; color: #111; line-height: 1; }
.ar { flex: none; display: inline-flex; width: 12px; height: 12px; align-items: center; justify-content: center; }
.ar::before { content: ""; border-left: 4px solid transparent; border-right: 4px solid transparent; border-top: 4px solid #111; }
.ar.box { width: 22px; height: 36px; margin-left: 4px; background: #f8f8f8; }
.sep { flex: none; width: 1px; height: 28px; background: #bdbdbd; }
.sep.tall { height: 38px; }
.grip { flex: none; width: 4px; height: 26px; background: repeating-linear-gradient(to bottom, #b8b8b8 0 3px, transparent 3px 8px); }
.more { margin-left: auto; margin-right: 6px; margin-top: -10px; font-style: normal; font-family: "Liberation Sans", sans-serif; font-weight: 700; font-size: 20px; line-height: 1; color: #111; align-self: center; }

.tb { display: flex; align-items: center; background: linear-gradient(to bottom, #fbfbfb, #f4f4f4 55%, #f0f0f0); border-radius: 4px; flex: none; }
.ml0 { margin-left: 0; } .ml2 { margin-left: 2px; } .ml3 { margin-left: 3px; } .ml4 { margin-left: 4px; } .ml5 { margin-left: 5px; } .ml6 { margin-left: 6px; } .ml7 { margin-left: 7px; } .ml8 { margin-left: 8px; } .ml9 { margin-left: 9px; } .ml10 { margin-left: 10px; } .ml11 { margin-left: 11px; } .ml13 { margin-left: 13px; } .ml14 { margin-left: 14px; }

.toprow { height: 40px; margin-bottom: 5px; flex: none; display: flex; }
.toprow .it { height: 35px; margin-bottom: 3px; }
.t-file { width: 224px; margin-left: 2px; padding-left: 6px; }
.t-main { width: 900px; margin-left: 4px; padding-left: 6px; }
.t-view { width: 785px; margin-left: 5px; padding-left: 6px; }
.white-it { background: #fff; }

.act { background: #e4f0fb; border: 2px solid #62aeee; padding-left: 4px; gap: 4px; }
.w112 { width: 112px; } .w76 { width: 76px; } .w77 { width: 77px; }
.nar { padding-left: 1px; gap: 2px; }
.r-d .it { height: 34px; }

.work { height: 866px; flex: none; display: flex; }
.left { width: 228px; flex: none; display: flex; flex-direction: column; }
.center { width: 1155px; margin-left: 6px; flex: none; display: flex; flex-direction: column; }
.right { width: 525px; margin-left: 4px; flex: none; display: flex; flex-direction: column; }

.panelhead { height: 22px; flex: none; display: flex; align-items: center; line-height: 22px; overflow: hidden; white-space: nowrap; }
.panelhead.blue { background: #0554e2; color: #fff; }
.pin { width: 12px; height: 14px; margin-left: auto; color: #fff; }
.close { width: 12px; height: 12px; margin-left: 15px; margin-right: 6px; color: #fff; }
.grayhead .close, .grayhead .pin { color: #222; }
.grayhead { background: #eeeeee; border: 1px solid #808080; border-width: 1px 1px 2px 1px; border-radius: 2px; height: 21px; }

.navbtn { display: block; width: 224px; height: 32px; margin: 2px 0 0 2px; padding: 0; background: linear-gradient(to bottom, #f8f8f8, #ececec); border: 1px solid #a8a8a8; border-bottom-width: 2px; font: inherit; color: #222; letter-spacing: 0; flex: none; }
.navbtn.first { margin-top: 3px; }
.navbtn.low { margin-top: 2px; }
.plusbar { flex: none; height: 38px; width: 224px; margin: 2px 0 0 2px; background: linear-gradient(to bottom, #fafafa, #f0f0f0); border: 1px solid #c8c8c8; display: flex; align-items: center; padding-left: 6px; gap: 6px; }
.plusbar svg { width: 30px; height: 26px; }

.treebox { flex: none; height: 664px; width: 222px; margin: 1px 0 0 3px; border: 2px solid #a4a4a4; display: grid; grid-template-columns: 193px 23px; grid-template-rows: 637px 23px; background: #f0f0f0; }
.treeview { background: #fff; overflow: hidden; display: grid; grid-auto-rows: 24.1px; align-content: start; }
.tr { display: flex; align-items: center; white-space: nowrap; overflow: hidden; line-height: 24px; font-size: 18px; }
.ch { width: 14px; height: 14px; margin-left: 11px; flex: none; }
.fd { width: 24px; height: 24px; margin-left: 9px; flex: none; }
.fd + span { margin-left: 7px; }
.gd { width: 66px; height: 24px; flex: none; margin-left: -2px; }
.ti { width: 22px; height: 24px; flex: none; }
.ti + span { margin-left: 7px; padding-right: 4px; }
.sel { background: #d8d8d8; padding-right: 6px; flex: none; box-shadow: -6px 0 0 #d8d8d8; }
.ln, .mono { font-family: "Liberation Mono", monospace; font-size: 16px; letter-spacing: -0.6px; }
.vscroll { grid-column: 2; grid-row: 1; display: flex; flex-direction: column; }
.sa { width: 14px; height: 14px; flex: none; }
.vscroll .sa { margin: 9px auto 2px; }
.vscroll .vthumb { height: 523px; background: #cdcdcd; flex: none; }
.vscroll .sa:last-child { margin-top: 65px; }
.hscroll { grid-column: 1 / 3; grid-row: 2; display: flex; align-items: center; padding-left: 7px; }
.hthumb { width: 120px; height: 22px; margin-left: 7px; margin-right: 22px; background: #cdcdcd; }
.hscroll .sa:last-child { margin-left: 0; }

.r-a { height: 38px; width: 1152px; margin-left: 2px; }
.r-b { height: 36px; width: 633px; margin: 3px 0 0 18px; }
.rowc { display: flex; margin-top: 4px; height: 42px; flex: none; }
.r-c { width: 1119px; margin-left: 2px; height: 100%; }
.r-c2 { width: 27px; margin-left: 3px; height: 100%; padding-left: 4px; }
.blankbox { width: 14px; height: 100%; margin-left: 4px; background: #fbfbfb; }
.r-d { height: 38px; width: 849px; margin: 2px 0 0 22px; }
.combo { flex: none; height: 100%; background: #fff; display: flex; align-items: center; justify-content: space-between; padding-left: 2px; overflow: hidden; white-space: nowrap; }
.combo .ar { width: 16px; height: 100%; background: #f6f6f6; margin-left: auto; }
.pad6 { padding-left: 6px; }
.w84 { width: 84px; } .w85 { width: 85px; } .w90 { width: 90px; } .w102 { width: 102px; } .w103 { width: 103px; } .w104 { width: 104px; }
.qtq { font-family: "Liberation Sans", sans-serif; font-size: 18px; color: #333; }
.canvas { display: block; flex: none; width: 1155px; height: 652px; margin-top: 4px; background: #000; }
.cad-a { font-family: "Liberation Sans", sans-serif; font-size: 19px; fill: #999; text-anchor: middle; }
.cad { font-family: "Liberation Sans", sans-serif; font-size: 23px; font-weight: 400; }
.cad.x { fill: #c01818; } .cad.y { fill: #0ca010; } .cad.z { fill: #0c68e0; }
.rowb { display: flex; height: 43px; margin-top: 4px; flex: none; }
.rowb .it { height: 36px; margin-bottom: 5px; padding-bottom: 2px; }
.rowb .combo, .rowb .gray, .rowb .spin, .rowb .sep { margin-bottom: 5px; }
.rowb .combo { height: 36px; }
.b-1 { width: 314px; }
.b-2 { width: 836px; margin-left: 4px; }
.gray { color: #8a8a8a; flex: none; }
.spin { flex: none; width: 87px; height: 36px; border: 2px solid #8c8c8c; background: #f6f6f6; display: flex; align-items: center; justify-content: flex-end; color: #777; font-family: "Liberation Sans", sans-serif; }
.sp { display: flex; flex-direction: column; align-items: center; gap: 9px; width: 16px; margin-left: 8px; margin-right: 2px; }
.sp u { display: block; border-left: 4px solid transparent; border-right: 4px solid transparent; }
.sp .up { border-bottom: 5px solid #777; }
.sp .dn { border-top: 5px solid #777; }

.propbox { flex: none; height: 841px; margin-top: 2px; background: #fff; border: 2px solid #c0c4c8; padding: 2px 3px 0 1px; }
.grid { display: grid; grid-template-columns: 31px 182px 305px; grid-template-rows: 33px repeat(17, 28.5px); }
.c { border-right: 2px solid #d4d4d4; border-bottom: 2px solid #d4d4d4; display: flex; align-items: center; white-space: nowrap; overflow: hidden; padding-top: 3px; }
.hd { background: linear-gradient(to bottom, #fefefe, #ececec); padding-top: 0; }
.cen { justify-content: center; }
.val { background: linear-gradient(to bottom, #fadf9f, #f2bc62); color: #78146a; }
.n { background: linear-gradient(to right, #f6f6f6, #e4e4e4); justify-content: center; font-family: "Liberation Mono", monospace; font-size: 16px; color: #222; }
.n.cur { background: #ffd088; color: #601060; }
.nm { padding-left: 30px; }
.link { color: #1414ee; }
.grp { color: #9a9a9a; padding-left: 5px; gap: 7px; }
.ex { flex: none; width: 18px; height: 18px; border: 1px solid #c8c8c8; background: #fff; color: #222; display: flex; align-items: center; justify-content: center; font-style: normal; font-family: "Liberation Sans", sans-serif; font-size: 17px; line-height: 1; }
.ch1 { padding-left: 45px; background: linear-gradient(#c8c8c8, #c8c8c8) 12px 0 / 2px 100% no-repeat, linear-gradient(#c8c8c8, #c8c8c8) 12px 50% / 26px 2px no-repeat; }
.ch1.lastc { background: linear-gradient(#c8c8c8, #c8c8c8) 12px 0 / 2px 50% no-repeat, linear-gradient(#c8c8c8, #c8c8c8) 12px 50% / 26px 2px no-repeat; }
.ch1.hl { background: linear-gradient(#c8d4e0, #c8d4e0) 12px 0 / 2px 100% no-repeat, linear-gradient(#c8d4e0, #c8d4e0) 12px 50% / 26px 2px no-repeat, #3c94ee; color: #fff; }
.v { padding-left: 3px; }
.dd { justify-content: space-between; padding-top: 0; }
.ddbtn { width: 24px; height: 26px; border: 2px solid #c4c4c4; background: #e4e4e4; display: flex; align-items: center; justify-content: center; }
.ddbtn svg { width: 12px; height: 12px; }

.status { height: 30px; margin-top: 2px; flex: none; display: flex; gap: 3px; border-bottom: 2px solid #c8c8c8; }
.st { height: 100%; background: linear-gradient(to bottom, #f8f8f8, #f0f0f0); border: 1px solid #e2e2e2; display: flex; align-items: center; padding-left: 2px; white-space: nowrap; }
.s1 { width: 222px; } .s2 { width: 117px; } .s3 { width: 146px; } .s4 { width: 72px; } .s5 { flex: 1; } .s6 { width: 103px; }

.taskbar { height: 10px; flex: 1; display: flex; overflow: hidden; }
.tk { height: 100%; }
.black { background: #000; } .w72 { width: 72px; } .w81 { width: 81px; }
.light { width: 515px; background: #f0f0f0; }
.gray-t { width: 72px; background: #444; }
.night { flex: 1; background: #040404; color: #ddd; display: flex; font-family: "Liberation Sans", sans-serif; font-size: 16px; line-height: 28px; }
.chev { margin-left: 629px; }
.clock { margin-left: 382px; }
```
